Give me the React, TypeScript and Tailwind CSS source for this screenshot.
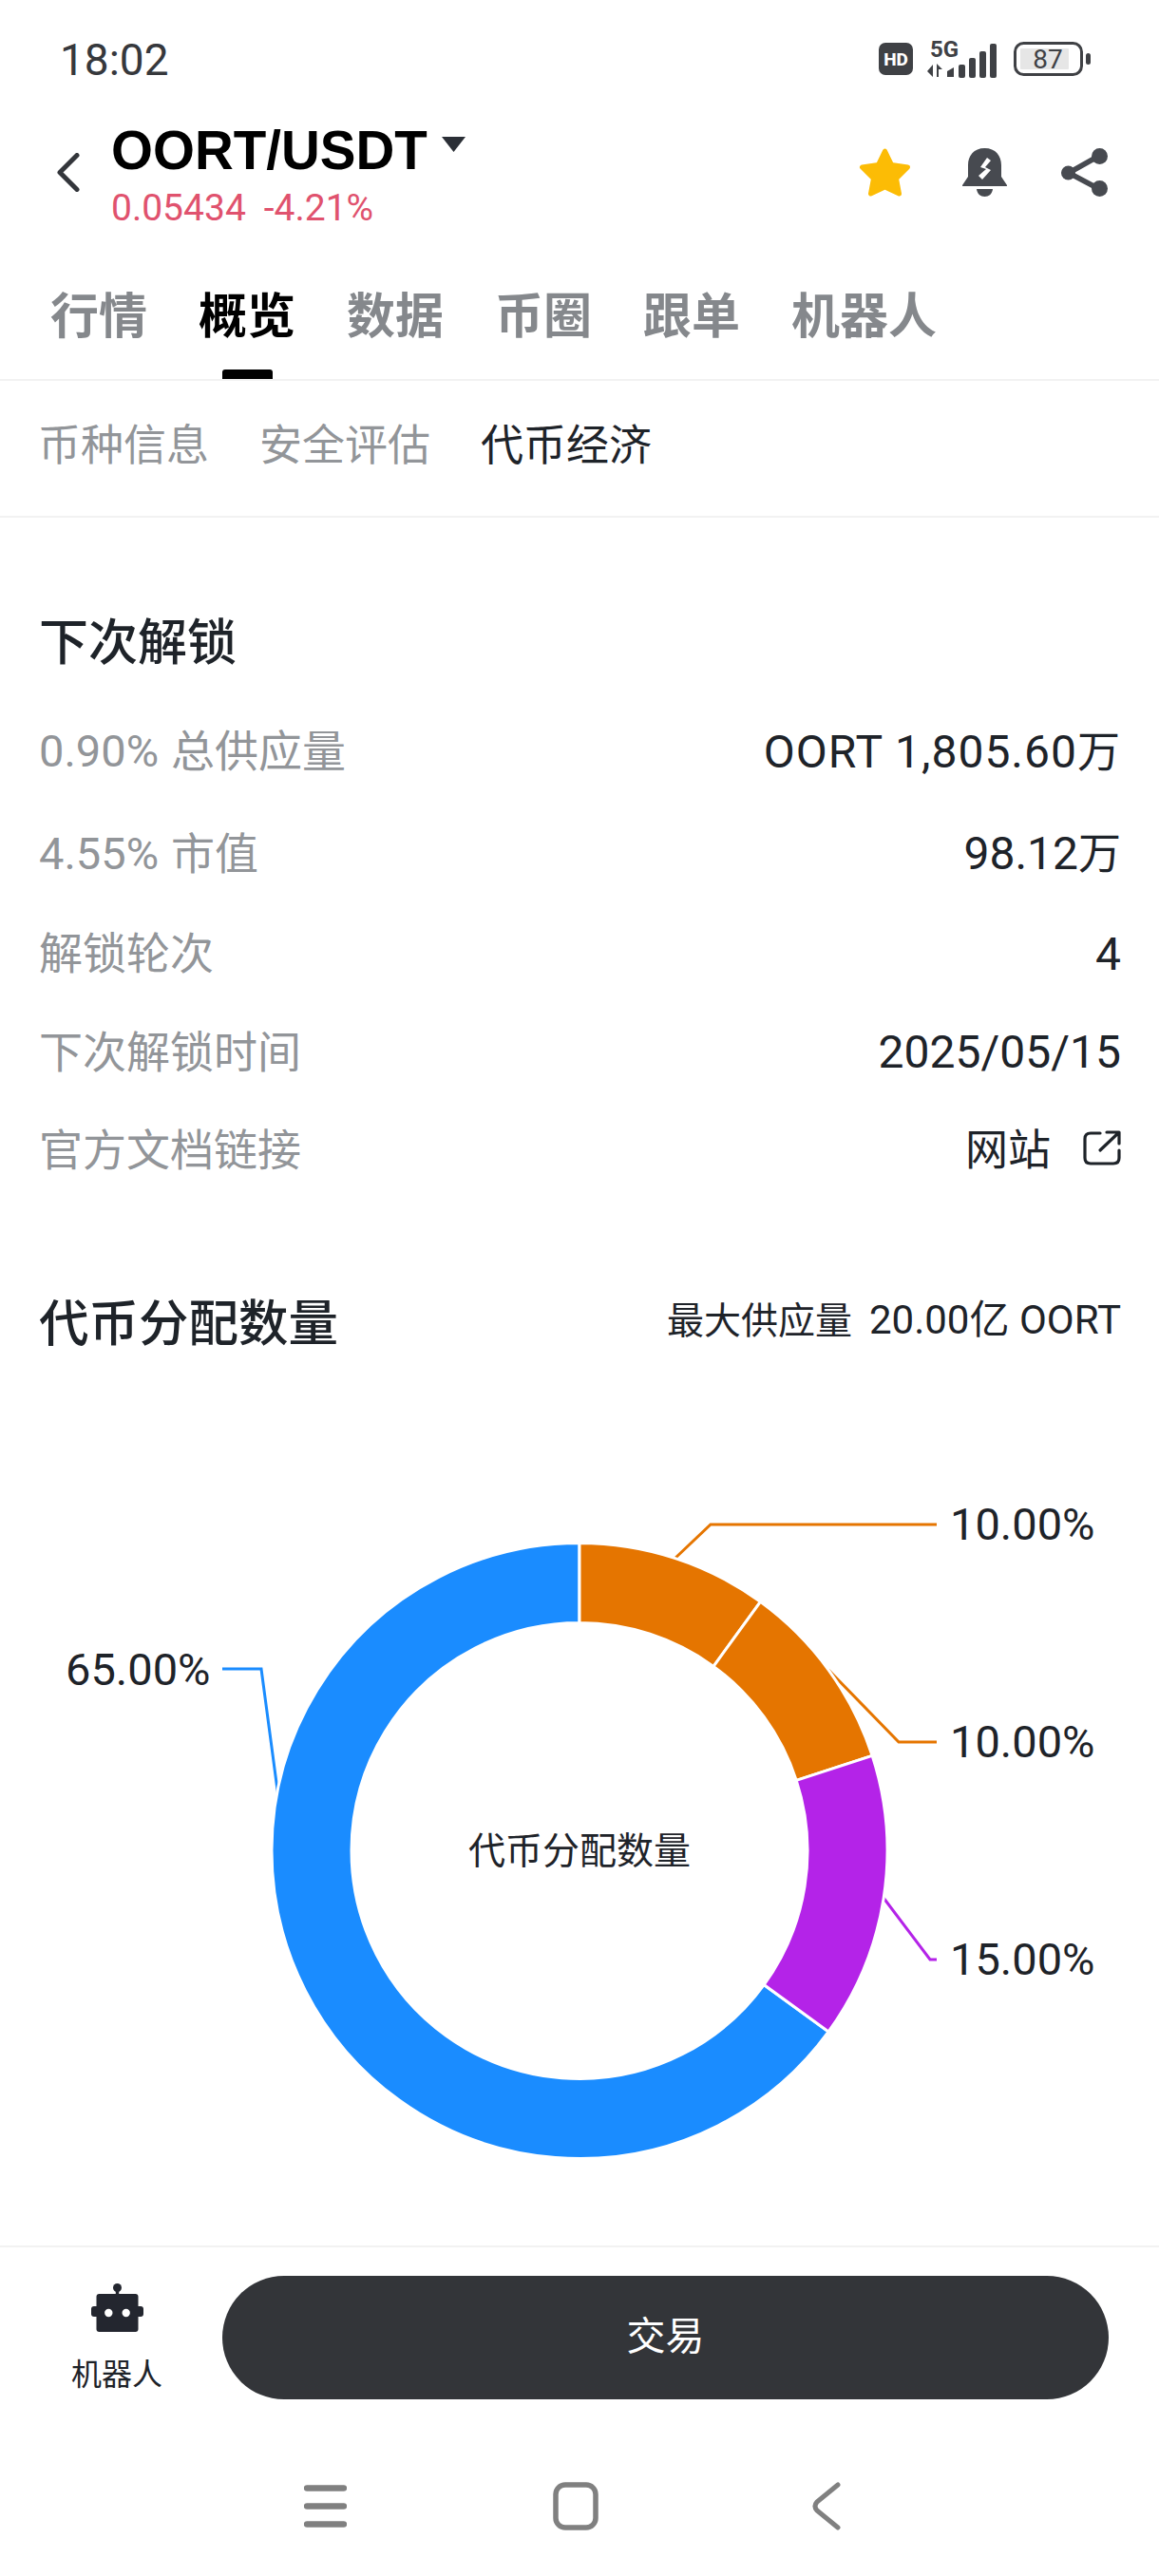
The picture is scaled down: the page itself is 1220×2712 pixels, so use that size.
const F = "[font-family:Roboto,'Noto_Sans_CJK_SC',sans-serif]";

function pt(cx: number, cy: number, r: number, deg: number) {
  const a = (deg * Math.PI) / 180;
  return `${(cx + r * Math.sin(a)).toFixed(2)} ${(cy - r * Math.cos(a)).toFixed(2)}`;
}
function seg(from: number, to: number) {
  const cx = 610, cy = 1948.5, R = 324, r = 240;
  const large = to - from > 180 ? 1 : 0;
  return `M${pt(cx, cy, R, from)} A${R} ${R} 0 ${large} 1 ${pt(cx, cy, R, to)} L${pt(cx, cy, r, to)} A${r} ${r} 0 ${large} 0 ${pt(cx, cy, r, from)} Z`;
}

function StatusIcons() {
  return (
    <div className="flex items-center">
      <svg width="36" height="34" viewBox="0 0 36 34" className="block">
        <rect width="36" height="34" rx="7" fill="#3f4145" />
        <text x="18" y="23.5" textAnchor="middle" fontSize="19" fontWeight="800" fill="#fff" fontFamily="Roboto, sans-serif">HD</text>
      </svg>
      <svg width="74" height="46" viewBox="0 -6 74 46" className="block ml-[15px] -mt-[6px]">
        <text x="3" y="18" fontSize="24" fontWeight="700" fill="#3f4145" fontFamily="Roboto, sans-serif">5G</text>
        <path d="M6 26 L6 39 L0 33 Z M10 39 L10 25 L16 31 L12 31 L12 39 Z" fill="#3f4145" />
        <path d="M21 39 L21 33 L28 29 L28 39 Z" fill="#3f4145" />
        <rect x="33" y="26" width="7" height="14" rx="2" fill="#3f4145" />
        <rect x="44" y="19" width="7" height="21" rx="2" fill="#3f4145" />
        <rect x="55" y="12" width="7" height="28" rx="2" fill="#3f4145" />
        <rect x="66" y="4" width="7" height="36" rx="2" fill="#3f4145" />
      </svg>
      <svg width="81" height="36" viewBox="0 0 81 36" className="block ml-[17px]">
        <rect x="1.5" y="1.5" width="70" height="33" rx="9" fill="none" stroke="#3f4145" strokeWidth="3" />
        <rect x="7" y="7" width="51" height="22" rx="1" fill="#e6e6e6" />
        <text x="36" y="28" textAnchor="middle" fontSize="28" fill="#3f4145" fontFamily="Roboto, sans-serif">87</text>
        <rect x="76" y="12" width="5" height="12" rx="2.5" fill="#3f4145" />
      </svg>
    </div>
  );
}

function Star() {
  return (
    <svg width="55" height="51" viewBox="0 0 55 51" className="block">
      <path d="M27.5 3 L34.5 17.5 L51.5 20 L39.5 32 L42.5 48 L27.5 41 L12.5 48 L15.5 32 L3.5 20 L20.5 17.5 Z" fill="#fcbc05" stroke="#fcbc05" strokeWidth="5" strokeLinejoin="round" />
    </svg>
  );
}
function Bell() {
  return (
    <svg width="47" height="51" viewBox="0 0 47 51" className="block">
      <path d="M23.5 0 C12 0 6 8 6 18 L6 30 L0 39 Q-0.5 40 1 40 L46 40 Q47.5 40 47 39 L41 30 L41 18 C41 8 35 0 23.5 0 Z" fill="#474a50" />
      <path d="M15 43 L32 43 C31.5 48 28 51 23.5 51 C19 51 15.5 48 15 43 Z" fill="#474a50" />
      <path d="M26 10 L19 20 L25 22 L17 29 L21 33 L30 23 L24 20 L30 13 Z" fill="#fff" />
    </svg>
  );
}
function Share() {
  return (
    <svg width="49" height="51" viewBox="0 0 49 51" className="block">
      <path d="M8 26 L40 8 M8 26 L40 43" stroke="#474a50" strokeWidth="5.5" fill="none" />
      <circle cx="7.5" cy="26" r="7.5" fill="#474a50" />
      <circle cx="40.5" cy="8.5" r="8.5" fill="#474a50" />
      <circle cx="40.5" cy="42.5" r="8.5" fill="#474a50" />
    </svg>
  );
}
function Robot() {
  return (
    <svg width="55" height="51" viewBox="0 0 55 51" className="block">
      <circle cx="27.5" cy="4.5" r="4.5" fill="#23262f" />
      <rect x="25.8" y="6" width="3.4" height="6" fill="#23262f" />
      <rect x="5.5" y="11" width="44" height="40" rx="3" fill="#23262f" />
      <rect x="0" y="24" width="55" height="11" rx="3" fill="#23262f" />
      <circle cx="18.3" cy="31" r="4.2" fill="#fff" />
      <circle cx="36.7" cy="31" r="4.2" fill="#fff" />
    </svg>
  );
}

const rows = [
  { p: "0.90%", l: "总供应量", v: "OORT 1,805.60", u: "万", h: "h-[108px]", t: "tracking-[1px]" },
  { p: "4.55%", l: "市值", v: "98.12", u: "万", h: "h-[108px]", t: "" },
  { p: "", l: "解锁轮次", v: "4", u: "", h: "h-[106px]", t: "" },
  { p: "", l: "下次解锁时间", v: "2025/05/15", u: "", h: "h-[102px]", t: "" },
];

function Pct({ children, className }: { children: string; className: string }) {
  return (
    <span className={`absolute text-[47px] leading-[56px] text-[#1e2329] ${className}`}>{children}</span>
  );
}

export default function App() {
  return (
    <div lang="zh-CN" className={`flex flex-col w-[1220px] h-[2712px] bg-white overflow-hidden ${F}`}>
      <div className="flex items-center justify-between h-[124px] pl-[63px] pr-[72px] shrink-0">
        <span className="text-[46px] leading-[50px] pt-[2px] text-[#36383c]">18:02</span>
        <StatusIcons />
      </div>

      <div className="flex items-start h-[146px] pl-[58px] pr-[54px] shrink-0">
        <svg width="26" height="41" viewBox="0 0 26 41" className="block mt-[37px]">
          <path d="M23 2.5 L5 20.5 L23 38.5" fill="none" stroke="#33363b" strokeWidth="5" strokeLinecap="round" strokeLinejoin="round" />
        </svg>
        <div className="ml-[33px] flex flex-col">
          <div className="flex items-start mt-[7px]">
            <span className="[font-family:'Liberation_Sans',sans-serif] font-bold text-[56.5px] leading-[56px] text-black">OORT/USDT</span>
            <svg width="25" height="16" viewBox="0 0 25 16" className="block ml-[15px] mt-[13px]">
              <path d="M0 0 L25 0 L12.5 16 Z" fill="#2b2f36" />
            </svg>
          </div>
          <div className="flex mt-[12px] text-[39px] leading-[40px] text-[#e0526e]">
            <span>0.05434</span>
            <span className="ml-[19px]">-4.21%</span>
          </div>
        </div>
        <div className="ml-auto flex items-start mt-[32px]">
          <Star />
          <div className="ml-[54px]"><Bell /></div>
          <div className="ml-[57px]"><Share /></div>
        </div>
      </div>

      <div className="flex gap-[54px] h-[131px] pl-[53px] border-b-2 border-[#f2f2f2] shrink-0">
        {["行情", "概览", "数据", "币圈", "跟单", "机器人"].map((t, i) => (
          <div key={t} className="flex flex-col items-center justify-between h-full pt-[38px]">
            <span className={`text-[51px] leading-[51px] ${i === 1 ? "font-bold text-black" : "font-semibold text-[#85888c]"}`}>{t}</span>
            {i === 1 && <div className="w-[53px] h-[10px] bg-black rounded-t-[3px]" />}
          </div>
        ))}
      </div>

      <div className="flex gap-[53px] h-[144px] pl-[40px] pt-[46px] border-b-2 border-[#f2f2f2] shrink-0">
        {["币种信息", "安全评估", "代币经济"].map((t, i) => (
          <span key={t} className={`text-[45px] leading-[45px] ${i === 2 ? "text-[#1e2329]" : "text-[#929599]"}`}>{t}</span>
        ))}
      </div>

      <div className="flex flex-col h-[879px] pl-[41px] pr-[40px] shrink-0">
        <div className="mt-[103px] mb-[30px] text-[52px] leading-[60px] font-medium text-[#1e2329]">下次解锁</div>
        {rows.map((r) => (
          <div key={r.l} className={`flex items-center justify-between ${r.h}`}>
            <span className="flex items-baseline text-[46px] text-[#929599]">
              {r.p && <span className="text-[47px] mr-[13px]">{r.p}</span>}
              {r.l}
            </span>
            <span className={`flex items-baseline text-[48px] text-[#1e2329] ${r.t}`}>
              {r.v}
              {r.u && <span className="text-[45px]">{r.u}</span>}
            </span>
          </div>
        ))}
        <div className="flex items-center justify-between text-[46px] h-[107px]">
          <span className="text-[#929599]">官方文档链接</span>
          <span className="flex items-center text-[45px] text-[#1e2329]">
            网站
            <svg width="40" height="38" viewBox="0 0 40 38" className="block ml-[34px] -mt-[6px]">
              <path d="M18 3 L8 3 Q2 3 2 9 L2 29 Q2 35 8 35 L32 35 Q38 35 38 29 L38 21" fill="none" stroke="#1e2329" strokeWidth="3.2" strokeLinecap="round" />
              <path d="M18 21 L37 3 M25 2 L38 2 L38 14" fill="none" stroke="#1e2329" strokeWidth="3.2" strokeLinecap="round" strokeLinejoin="round" />
            </svg>
          </span>
        </div>
        <div className="flex items-start justify-between mt-[99px]">
          <span className="text-[52.5px] leading-[60px] font-medium text-[#1e2329]">代币分配数量</span>
          <span className="flex items-baseline text-[39px] leading-[52px] text-[#1e2329] whitespace-pre">
            最大供应量
            <span className="ml-[18px] text-[42px]">20.00亿 OORT</span>
          </span>
        </div>
      </div>

      <div className="relative h-[940px] shrink-0">
        <svg width="1220" height="940" viewBox="0 1424 1220 940" className="absolute inset-0 block">
          <g fill="none" strokeWidth="3">
            <path d="M709 1642 L748 1605 L986 1605" stroke="#e57500" />
            <path d="M872 1758 L946 1834 L986 1834" stroke="#e57500" />
            <path d="M930 1998 L979 2063 L986 2063" stroke="#b423e8" />
            <path d="M234 1757 L275 1757 L293 1892" stroke="#1a8cff" />
          </g>
          <g stroke="#fff" strokeWidth="3">
            <path d={seg(126, 360)} fill="#1a8cff" />
            <path d={seg(0, 36)} fill="#e57500" />
            <path d={seg(36, 72)} fill="#e57500" />
            <path d={seg(72, 126)} fill="#b423e8" />
          </g>
        </svg>
        <Pct className="left-[69px] top-[306px]">65.00%</Pct>
        <Pct className="left-[1000px] top-[153px]">10.00%</Pct>
        <Pct className="left-[1000px] top-[382px]">10.00%</Pct>
        <Pct className="left-[1000px] top-[611px]">15.00%</Pct>
        <span className="absolute left-[460px] top-[499px] w-[300px] whitespace-nowrap text-center text-[39px] leading-[52px] text-[#1e2329]">代币分配数量</span>
      </div>

      <div className="flex flex-col h-[348px] border-t-2 border-[#f2f2f2] pt-[30px] shrink-0">
        <div className="flex items-start h-[130px]">
          <div className="flex flex-col items-center w-[234px] pt-[8px] shrink-0">
            <div className="ml-[12px]"><Robot /></div>
            <span className="ml-[12px] mt-[23px] text-[32px] leading-[44px] text-[#1e2329]">机器人</span>
          </div>
          <div className="flex items-center justify-center w-[933px] h-[130px] rounded-full bg-[#333539] text-white text-[41px]">交易</div>
        </div>
        <div className="flex items-center mt-[87px] pl-[320px]">
          <svg width="45" height="45" viewBox="0 0 45 45" className="block">
            <path d="M3 3.5 H42 M3 22.5 H42 M3 41.5 H42" stroke="#808080" strokeWidth="6.5" strokeLinecap="round" />
          </svg>
          <svg width="48" height="51" viewBox="0 0 48 51" className="block ml-[217px]">
            <rect x="3" y="3" width="42" height="45" rx="10" fill="none" stroke="#808080" strokeWidth="5.5" />
          </svg>
          <svg width="30" height="51" viewBox="0 0 30 51" className="block ml-[225px]">
            <path d="M27 3 L5 21 Q1 25.5 5 30 L27 48" fill="none" stroke="#808080" strokeWidth="5" strokeLinecap="round" strokeLinejoin="round" />
          </svg>
        </div>
      </div>
    </div>
  );
}
